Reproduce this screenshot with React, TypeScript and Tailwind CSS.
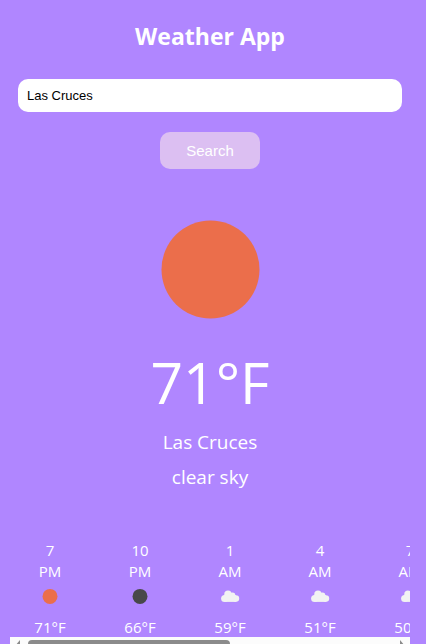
import React, { useState } from "react";

type Sky = "sun" | "moon" | "cloud";

interface Hour {
  hour: string;
  period: string;
  sky: Sky;
  temp: string;
}

const hours: Hour[] = [
  { hour: "7", period: "PM", sky: "sun", temp: "71°F" },
  { hour: "10", period: "PM", sky: "moon", temp: "66°F" },
  { hour: "1", period: "AM", sky: "cloud", temp: "59°F" },
  { hour: "4", period: "AM", sky: "cloud", temp: "51°F" },
  { hour: "7", period: "AM", sky: "cloud", temp: "50°F" },
];

function SkyIcon({ sky }: { sky: Sky }) {
  if (sky === "cloud") {
    return (
      <svg viewBox="0 0 20 16" className="h-4 w-5" fill="#f2f2f2" aria-hidden="true">
        <circle cx="4.6" cy="10.4" r="3.5" />
        <circle cx="8" cy="6.2" r="3.7" />
        <circle cx="12.6" cy="7.3" r="2.7" />
        <circle cx="15.9" cy="10.6" r="3.3" />
        <rect x="4.6" y="7" width="11.3" height="6.9" />
      </svg>
    );
  }
  return (
    <svg viewBox="0 0 16 16" className="h-4 w-4" aria-hidden="true">
      <circle cx="8" cy="8.4" r="7.5" fill={sky === "sun" ? "#eb6e4b" : "#48484a"} />
    </svg>
  );
}

function HourCard({ item }: { item: Hour }) {
  return (
    <li className="flex w-20 shrink-0 flex-col items-center text-[15px] leading-[21px]">
      <span>{item.hour}</span>
      <span>{item.period}</span>
      <span className="flex h-7 items-center">
        <SkyIcon sky={item.sky} />
      </span>
      <span className="mt-[7px] leading-5">{item.temp}</span>
    </li>
  );
}

function ScrollTrack() {
  return (
    <div className="flex h-[17px] items-center bg-[#fcfcfc] px-[5px]" aria-hidden="true">
      <svg viewBox="0 0 5 12" className="h-3 w-[5px]">
        <path d="M5 0v12L0 6z" fill="#8b8b8b" />
      </svg>
      <div className="mx-2 flex-1">
        <div className="h-[11px] w-5/9 rounded-[4px] bg-[#8b8b8b]" />
      </div>
      <svg viewBox="0 0 5 12" className="h-3 w-[5px]">
        <path d="M0 0v12l5-6z" fill="#8b8b8b" />
      </svg>
    </div>
  );
}

export default function App() {
  const [city, setCity] = useState("Las Cruces");

  return (
    <main className="h-screen overflow-hidden bg-[#b086ff] pl-2.5 pr-4 font-['Segoe_UI','Open_Sans',sans-serif] text-white">
      <h1 className="pt-5 text-center text-[23px] leading-8 font-bold">Weather App</h1>
      <form className="mt-[27px] flex flex-col items-center px-2" onSubmit={(e) => e.preventDefault()}>
        <input
          type="text"
          aria-label="City"
          value={city}
          onChange={(e) => setCity(e.target.value)}
          className="h-[33px] w-full rounded-[10px] bg-white px-[9px] font-['Liberation_Sans',Arial,sans-serif] text-[13px] text-black outline-none"
        />
        <button
          type="submit"
          className="mt-5 h-[37px] w-[100px] rounded-[10px] bg-[#dcbff2] pt-px font-['Liberation_Sans',Arial,sans-serif] text-[15px] text-white"
        >
          Search
        </button>
      </form>
      <section className="mt-[50px] flex flex-col items-center">
        <svg viewBox="0 0 100 100" className="size-[100px]" role="img" aria-label="clear sky">
          <circle cx="50.5" cy="50.5" r="49" fill="#eb6e4b" />
        </svg>
        <p className="mt-5 text-[57px] leading-[86px]">71°F</p>
        <p className="text-[19px] leading-[35px]">Las Cruces</p>
        <p className="text-[19px] leading-[35px]">clear sky</p>
      </section>
      <section className="mt-[45px]" aria-label="Hourly forecast">
        <ul className="flex gap-2.5 overflow-hidden">
          {hours.map((item) => (
            <HourCard key={item.hour + item.period} item={item} />
          ))}
        </ul>
        <ScrollTrack />
      </section>
    </main>
  );
}
